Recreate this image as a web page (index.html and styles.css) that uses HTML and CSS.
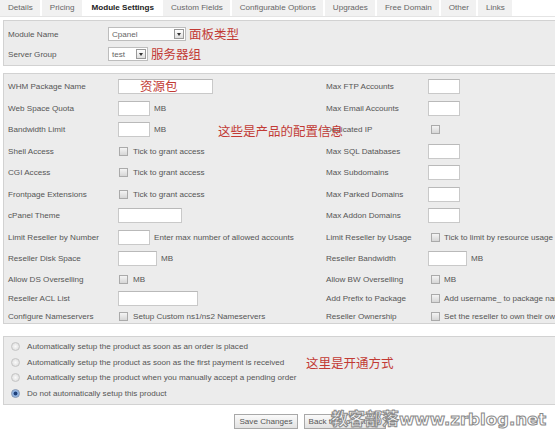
FILE: index.html
```html
<!DOCTYPE html>
<html lang="zh">
<head>
    <meta charset="UTF-8">
    <title>Module Settings</title>
    <link rel="stylesheet" href="styles.css">
</head>
<body>
<div class="page">

    <!-- вкладки товара -->
    <ul class="tabs">
        <li>Details</li>
        <li>Pricing</li>
        <li class="active">Module Settings</li>
        <li>Custom Fields</li>
        <li>Configurable Options</li>
        <li>Upgrades</li>
        <li>Free Domain</li>
        <li>Other</li>
        <li>Links</li>
    </ul>

    <!-- модуль и группа серверов -->
    <div class="box module-box">
        <div class="mrow">
            <span class="mlabel">Module Name</span>
            <span class="select wide"><span class="val">Cpanel</span><span class="arrow"></span></span>
            <span class="note">面板类型</span>
        </div>
        <div class="mrow">
            <span class="mlabel">Server Group</span>
            <span class="select narrow"><span class="val">test</span><span class="arrow"></span></span>
            <span class="note">服务器组</span>
        </div>
    </div>

    <!-- параметры пакета -->
    <div class="box config-box">
        <div class="form">
            <div class="fl">WHM Package Name</div>
            <div class="fa"><input class="txt w94" type="text"><span class="note over-pkg">资源包</span></div>
            <div class="fl">Max FTP Accounts</div>
            <div class="fa r"><input class="txt w32" type="text"></div>

            <div class="fl">Web Space Quota</div>
            <div class="fa"><input class="txt w32" type="text"> MB</div>
            <div class="fl">Max Email Accounts</div>
            <div class="fa r"><input class="txt w32" type="text"></div>

            <div class="fl">Bandwidth Limit</div>
            <div class="fa"><input class="txt w32" type="text"> MB</div>
            <div class="fl">Dedicated IP</div>
            <div class="fa r"><input class="chk" type="checkbox"></div>

            <div class="fl">Shell Access</div>
            <div class="fa"><input class="chk" type="checkbox"> Tick to grant access</div>
            <div class="fl">Max SQL Databases</div>
            <div class="fa r"><input class="txt w32" type="text"></div>

            <div class="fl">CGI Access</div>
            <div class="fa"><input class="chk" type="checkbox"> Tick to grant access</div>
            <div class="fl">Max Subdomains</div>
            <div class="fa r"><input class="txt w32" type="text"></div>

            <div class="fl">Frontpage Extensions</div>
            <div class="fa"><input class="chk" type="checkbox"> Tick to grant access</div>
            <div class="fl">Max Parked Domains</div>
            <div class="fa r"><input class="txt w32" type="text"></div>

            <div class="fl">cPanel Theme</div>
            <div class="fa"><input class="txt w64" type="text"></div>
            <div class="fl">Max Addon Domains</div>
            <div class="fa r"><input class="txt w32" type="text"></div>

            <div class="fl">Limit Reseller by Number</div>
            <div class="fa"><input class="txt w32" type="text"> Enter max number of allowed accounts</div>
            <div class="fl">Limit Reseller by Usage</div>
            <div class="fa r"><input class="chk" type="checkbox"> Tick to limit by resource usage</div>

            <div class="fl">Reseller Disk Space</div>
            <div class="fa"><input class="txt w39" type="text"> MB</div>
            <div class="fl">Reseller Bandwidth</div>
            <div class="fa r"><input class="txt w39" type="text"> MB</div>

            <div class="fl">Allow DS Overselling</div>
            <div class="fa"><input class="chk" type="checkbox"> MB</div>
            <div class="fl">Allow BW Overselling</div>
            <div class="fa r"><input class="chk" type="checkbox"> MB</div>

            <div class="fl">Reseller ACL List</div>
            <div class="fa"><input class="txt w80" type="text"></div>
            <div class="fl">Add Prefix to Package</div>
            <div class="fa r"><input class="chk" type="checkbox"> Add username_ to package name</div>

            <div class="fl last">Configure Nameservers</div>
            <div class="fa last"><input class="chk" type="checkbox"> Setup Custom ns1/ns2 Nameservers</div>
            <div class="fl last">Reseller Ownership</div>
            <div class="fa r last"><input class="chk" type="checkbox"> Set the reseller to own their own account</div>
        </div>
        <span class="note over-config">这些是产品的配置信息</span>
    </div>

    <!-- способ активации -->
    <div class="box setup-box">
        <label class="radio-row"><input type="radio" name="autosetup"> Automatically setup the product as soon as an order is placed</label>
        <label class="radio-row"><input type="radio" name="autosetup"> Automatically setup the product as soon as the first payment is received</label>
        <label class="radio-row"><input type="radio" name="autosetup"> Automatically setup the product when you manually accept a pending order</label>
        <label class="radio-row"><input type="radio" name="autosetup" checked> Do not automatically setup this product</label>
        <span class="note over-setup">这里是开通方式</span>
    </div>

    <div class="buttons">
        <button type="button">Save Changes</button>
        <button type="button">Back to Product List</button>
    </div>

    <div class="watermark">教客部落<span class="wm-url">www.zrblog.net</span></div>
</div>
</body>
</html>
```

FILE: styles.css
```css
/* общие стили */
html, body {
    margin: 0;
    overflow: hidden;
    background: #fff;
}
.page {
    position: relative;
    width: 620px;
    height: 431px;
    font-family: "Liberation Sans", Arial, sans-serif;
    font-size: 8.1px;
    color: #555;
}

/* вкладки */
.tabs {
    list-style: none;
    margin: 0;
    padding: 0;
    display: flex;
    gap: 2px;
    height: 16px;
    border-bottom: 1px solid #e4e4e4;
}
.tabs li {
    padding: 0 7px 0 8px;
    line-height: 16px;
    background: #f1f1f1;
    color: #666;
}
.tabs li.active {
    background: #fff;
    color: #222;
    font-weight: bold;
}

/* серые блоки */
.box {
    position: relative;
    margin-left: 3px;
    background: #ececec;
    border: 1px solid #d2d2d2;
}
.module-box {
    margin-top: 3px;
    padding: 3px 0 1px;
}
.mrow {
    display: flex;
    align-items: center;
    height: 20px;
}
.mlabel {
    width: 100px;
    padding-left: 4px;
}

/* выпадающий список */
.select {
    display: inline-flex;
    align-items: center;
    justify-content: space-between;
    height: 12px;
    background: #fff;
    border: 1px solid #bdbdbd;
    color: #666;
}
.select.wide { width: 76px; }
.select.narrow { width: 38px; }
.select .val { padding-left: 3px; }
.select .arrow {
    position: relative;
    width: 8px;
    height: 8px;
    margin-right: 1px;
    border: 1px solid #999;
    background: linear-gradient(#fff, #ddd);
}
.select .arrow::after {
    content: "";
    position: absolute;
    left: 2px;
    top: 3px;
    border-left: 2px solid transparent;
    border-right: 2px solid transparent;
    border-top: 3px solid #333;
}

/* красные пометки */
.note {
    font-family: "Noto Sans CJK SC", sans-serif;
    font-size: 12.5px;
    color: #c23a34;
    margin-left: 3px;
    line-height: 1;
}
.over-pkg {
    position: absolute;
    left: 22px;
    top: 4px;
    margin: 0;
}
.over-config {
    position: absolute;
    left: 214px;
    top: 51px;
    margin: 0;
}
.over-setup {
    position: absolute;
    left: 302px;
    top: 20px;
    margin: 0;
}

/* форма параметров */
.config-box {
    margin-top: 7px;
    padding: 2px 0 0;
}
.form {
    display: grid;
    grid-template-columns: 114px 204px 106px 1fr;
    grid-template-rows: repeat(9, 21.5px) 19px 19px 15px;
}
.fl, .fa {
    display: flex;
    align-items: center;
    white-space: nowrap;
}
.fl { padding-left: 4px; }
.fa { position: relative; }
.form .last {
    box-sizing: border-box;
    padding-top: 2px;
}
.txt {
    box-sizing: border-box;
    height: 15px;
    margin: 0 4px 0 0;
    padding: 0;
    border: 1px solid #c9c9c9;
    border-top-color: #b9b9b9;
    background: #fff;
}
.w32 { width: 32px; }
.w39 { width: 39px; }
.w64 { width: 64px; }
.w80 { width: 80px; }
.w94 { width: 95px; }

.chk {
    appearance: none;
    -webkit-appearance: none;
    box-sizing: border-box;
    width: 9px;
    height: 9px;
    margin: 0 5px 0 1px;
    border: 1px solid #aaa;
    background: linear-gradient(#f4f4f4, #d6d6d6);
}
.fa.r .chk {
    margin: 0 4px 0 3px;
}

/* радиокнопки */
.setup-box {
    margin-top: 12.5px;
    padding: 2px 0 3px;
}
.radio-row {
    display: flex;
    align-items: center;
    height: 15.6px;
    padding-left: 7px;
}
.radio-row input {
    appearance: none;
    -webkit-appearance: none;
    width: 9px;
    height: 9px;
    margin: 0 7px 0 0;
    border: 1px solid #c4c4c4;
    border-radius: 50%;
    background: radial-gradient(#fafafa, #d8d8d8);
}
.radio-row input:checked {
    background: radial-gradient(circle, #1d3f78 0 1.6px, #7ea4d8 2.2px, #c9dcf2 100%);
    border-color: #7e93b3;
}

/* кнопки */
.buttons {
    display: flex;
    justify-content: center;
    gap: 6px;
    margin-top: 9px;
}
.buttons button {
    height: 15px;
    padding: 0 4px;
    font-family: inherit;
    font-size: 8.1px;
    color: #555;
    background: linear-gradient(#fafafa, #e2e2e2);
    border: 1px solid #a8a8a8;
}

/* водяной знак */
.watermark {
    position: absolute;
    left: 331px;
    top: 408px;
    font-family: "Noto Sans CJK SC", sans-serif;
    font-size: 17px;
    font-weight: bold;
    line-height: 20px;
    color: rgba(255, 255, 255, 0.8);
    -webkit-text-stroke: 1px #8a8a8a;
    white-space: nowrap;
}
.wm-url {
    font-family: "DejaVu Sans", sans-serif;
    font-size: 16.6px;
}
```
